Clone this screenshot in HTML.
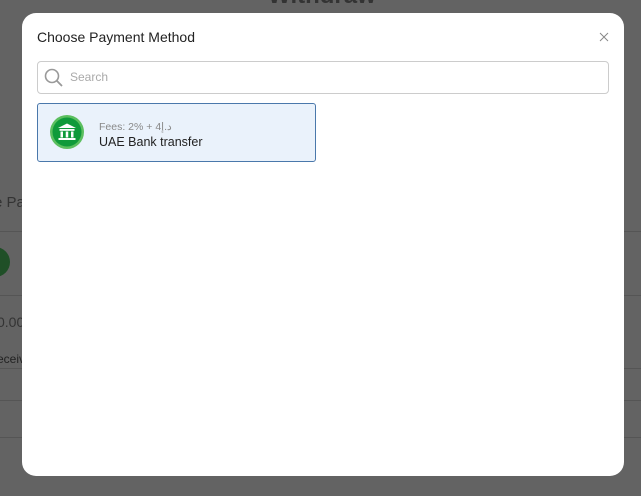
<!DOCTYPE html>
<html><head><meta charset="utf-8"><style>
html,body{margin:0;padding:0;width:641px;height:496px;overflow:hidden;background:#636363;font-family:"Liberation Sans","Noto Sans CJK SC",sans-serif;}
.bg{position:absolute;left:0;top:0;width:641px;height:496px;}
.line{position:absolute;height:1px;background:#555;}
.modal{position:absolute;left:22px;top:13px;width:602px;height:463px;background:#fff;border-radius:14px;}
.title{position:absolute;left:15px;top:16px;font-size:14px;color:#222;}
.search{position:absolute;left:15px;top:48px;width:570px;height:31px;border:1px solid #ccc;border-radius:4px;}
.search span{position:absolute;left:32px;top:8px;font-size:12px;color:#aaa;}
.card{position:absolute;left:15px;top:90px;width:277px;height:57px;border:1px solid #4a78ab;border-radius:3px;background:#eaf2fb;}
.fees{position:absolute;left:61px;top:17px;font-size:10.5px;color:#888;}
.name{position:absolute;left:61px;top:31px;font-size:12.5px;color:#222;}
</style></head><body>
<div class="bg">
<div style="position:absolute;left:268px;top:-18px;font-size:24px;font-weight:bold;color:#333">Withdraw</div>
<div style="position:absolute;left:-6px;top:194px;font-size:15px;color:#333">e Pa</div>
<div class="line" style="left:0;top:231px;width:22px"></div>
<div style="position:absolute;left:-20px;top:247px;width:30px;height:30px;border-radius:50%;background:#1f4f27"></div>
<div class="line" style="left:0;top:295px;width:22px"></div>
<div style="position:absolute;left:-3px;top:314px;font-size:14px;color:#333">0.00</div>
<div style="position:absolute;left:-3px;top:352px;font-size:12px;color:#222">eceiv</div>
<div class="line" style="left:0;top:368px;width:22px"></div>
<div class="line" style="left:0;top:400px;width:22px"></div>
<div class="line" style="left:0;top:437px;width:22px"></div>
<div class="line" style="left:624px;top:231px;width:17px"></div>
<div class="line" style="left:624px;top:295px;width:17px"></div>
<div class="line" style="left:624px;top:368px;width:17px"></div>
<div class="line" style="left:624px;top:400px;width:17px"></div>
<div class="line" style="left:624px;top:437px;width:17px"></div>
</div>
<div class="modal">
<div class="title">Choose Payment Method</div>
<svg width="10" height="10" style="position:absolute;left:577px;top:19px" viewBox="0 0 10 10"><path d="M1 1 L9 9 M9 1 L1 9" stroke="#888" stroke-width="1"/></svg>
<div class="search">
<svg width="20" height="20" style="position:absolute;left:6px;top:6px" viewBox="0 0 20 20"><circle cx="8" cy="8" r="6.5" fill="none" stroke="#999" stroke-width="1.6"/><line x1="12.8" y1="12.8" x2="18" y2="18" stroke="#999" stroke-width="1.8"/></svg>
<span>Search</span>
</div>
<div class="card">
<svg width="36" height="36" style="position:absolute;left:11px;top:10px" viewBox="0 0 36 36">
<circle cx="18" cy="18" r="17" fill="#5cbf5f"/><circle cx="18" cy="18" r="14.5" fill="#0f9a3a"/>
<path d="M9 14 L18 9.5 L27 14 Z" fill="#fff"/>
<rect x="10.5" y="15" width="15" height="1.8" fill="#fff"/>
<rect x="11.5" y="17.5" width="2.5" height="6" fill="#fff"/><rect x="16.75" y="17.5" width="2.5" height="6" fill="#fff"/><rect x="22" y="17.5" width="2.5" height="6" fill="#fff"/>
<rect x="9.5" y="24" width="17" height="2" fill="#fff"/>
</svg>
<div class="fees">Fees: 2% + 4د.إ</div>
<div class="name">UAE Bank transfer</div>
</div>
</div>
</body></html>
